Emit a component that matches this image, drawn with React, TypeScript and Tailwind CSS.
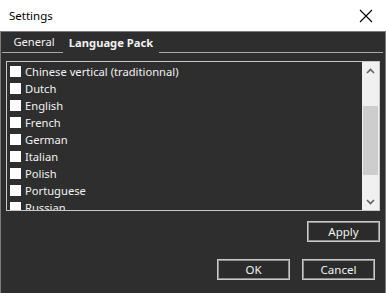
import React from 'react';

const languages = [
  'Chinese vertical (traditionnal)',
  'Dutch',
  'English',
  'French',
  'German',
  'Italian',
  'Polish',
  'Portuguese',
  'Russian',
  'Spanish',
];

const DialogButton: React.FC<{ label: string }> = ({ label }) => (
  <button className="w-[73px] h-[21px] border border-[#cacaca] shadow-[inset_0_0_0_1px_#8e8e8e] bg-[#2b2b2b] text-[#f2f2f2] text-[11.5px] leading-none flex items-center justify-center">
    {label}
  </button>
);

const App: React.FC = () => {
  return (
    <div className="w-[386px] h-[293px] flex flex-col font-['Segoe_UI','Noto_Sans',sans-serif] text-[11.2px]">
      {/* Title bar */}
      <div className="h-[31px] bg-white flex items-center justify-between pl-[9px] pr-[13px] text-black">
        <span className="text-[11.5px]">Settings</span>
        <svg width="14" height="14" viewBox="0 0 14 14" className="text-black">
          <path d="M1 1 L13 13 M13 1 L1 13" stroke="currentColor" strokeWidth="1.1" fill="none" />
        </svg>
      </div>

      {/* Body */}
      <div className="flex-1 bg-[#2e2e2e] border border-[#7c7c7c] border-b-0 flex flex-col text-[#f2f2f2]">
        {/* Tabs */}
        <div className="h-[21px] flex items-end">
          <div className="ml-[1px] w-[61px] h-full border-b border-[#a8a8a8] flex items-end justify-center pb-[1px] pl-[3px]">
            <span>General</span>
          </div>
          <div className="w-[96px] h-full flex items-end justify-center pb-[1px] font-bold">
            <span>Language Pack</span>
          </div>
          <div className="flex-1 mr-[2px] h-full border-b border-[#a8a8a8]" />
        </div>

        {/* List */}
        <div className="mt-[8px] mx-[5px] h-[150px] border border-[#c8c8c8] flex overflow-hidden">
          <div className="flex-1 pt-[1px] pl-[3px] overflow-hidden">
            {languages.map((lang) => (
              <div key={lang} className="h-[17px] flex items-center gap-[4px]">
                <span className="w-[11px] h-[11px] bg-white shrink-0" />
                <span className="leading-none">{lang}</span>
              </div>
            ))}
          </div>
          <div className="w-[17px] bg-[#f0f0f0] flex flex-col items-center">
            <div className="h-[17px] flex items-center justify-center">
              <svg width="9" height="6" viewBox="0 0 9 6">
                <path d="M1 5 L4.5 1.5 L8 5" stroke="#606060" strokeWidth="1.6" fill="none" />
              </svg>
            </div>
            <div className="mt-[27px] w-[15px] h-[69px] bg-[#cdcdcd]" />
            <div className="flex-1" />
            <div className="h-[17px] flex items-center justify-center">
              <svg width="9" height="6" viewBox="0 0 9 6">
                <path d="M1 1 L4.5 4.5 L8 1" stroke="#606060" strokeWidth="1.6" fill="none" />
              </svg>
            </div>
          </div>
        </div>

        {/* Apply */}
        <div className="flex justify-end mt-[10px] mr-[5px]">
          <DialogButton label="Apply" />
        </div>

        {/* OK / Cancel */}
        <div className="flex justify-end gap-[12px] mt-[17px] mr-[10px]">
          <DialogButton label="OK" />
          <DialogButton label="Cancel" />
        </div>
      </div>
    </div>
  );
};

export default App;
